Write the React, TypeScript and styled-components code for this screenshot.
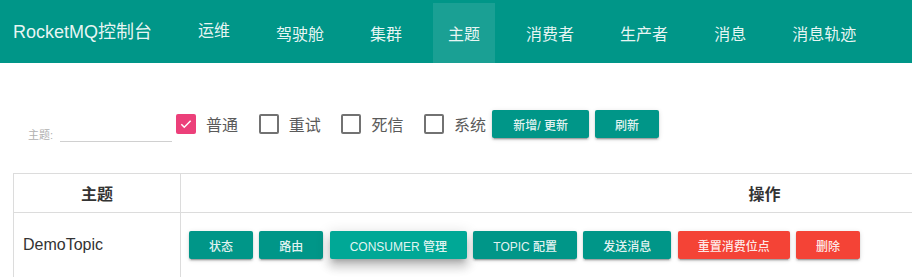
import * as React from 'react'
import styled, { createGlobalStyle } from 'styled-components'

const GlobalStyle = createGlobalStyle`
    html, body {
        margin: 0;
        padding: 0;
        background: #fff;
        overflow: hidden;
    }
    body {
        font-family: "Liberation Sans", "Noto Sans CJK SC", sans-serif;
    }
`

const NAV_ITEMS = ['运维', '驾驶舱', '集群', '主题', '消费者', '生产者', '消息', '消息轨迹']

const FILTERS = [
    { label: '普通', checked: true },
    { label: '重试', checked: false },
    { label: '死信', checked: false },
    { label: '系统', checked: false },
]

const ACTIONS = [
    { text: '状态', color: 'primary' },
    { text: '路由', color: 'primary' },
    { text: 'CONSUMER 管理', color: 'primary', hover: true },
    { text: 'TOPIC 配置', color: 'primary' },
    { text: '发送消息', color: 'primary' },
    { text: '重置消费位点', color: 'warn' },
    { text: '删除', color: 'warn' },
]

const Page = styled.div`
    width: 912px;
    min-height: 277px;
    overflow: hidden;
`

const NavBar = styled.div`
    height: 63px;
    background: #009688;
    display: flex;
    align-items: flex-start;
`

const Brand = styled.div`
    height: 63px;
    padding: 0 31px 3px 13px;
    display: flex;
    align-items: center;
    box-sizing: border-box;
    font-size: 18px;
    color: rgba(255, 255, 255, 0.92);
    white-space: nowrap;
`

const NavList = styled.div`
    display: flex;
    gap: 16px;
    margin-top: 3px;
`

const NavItem = styled.div<{ $active?: boolean; $lift?: boolean }>`
    height: 60px;
    padding: 0 15px ${p => (p.$lift ? '8px' : '0')};
    box-sizing: border-box;
    display: flex;
    align-items: center;
    font-size: 16px;
    color: rgba(255, 255, 255, 0.92);
    background: ${p => (p.$active ? 'rgba(255, 255, 255, 0.1)' : 'transparent')};
    white-space: nowrap;
`

const Toolbar = styled.div`
    display: flex;
    align-items: center;
    height: 28px;
    margin-top: 47px;
    padding-left: 28px;
`

const Field = styled.div`
    display: flex;
    align-items: flex-end;
    height: 36px;
    width: 148px;
`

const FieldLabel = styled.span`
    width: 27px;
    font-size: 11px;
    line-height: 14px;
    color: #b0b0b0;
`

const FieldInput = styled.div`
    width: 112px;
    height: 20px;
    margin-left: 5px;
    border-bottom: 1px solid #d0d0d0;
`

const Check = styled.label`
    display: flex;
    align-items: center;
    margin-right: 20.7px;
    &:last-of-type {
        margin-right: 6px;
    }
`

const Box = styled.span<{ $checked: boolean }>`
    width: 20px;
    height: 20px;
    box-sizing: border-box;
    border-radius: 2px;
    border: ${p => (p.$checked ? 'none' : '2px solid #727272')};
    background: ${p => (p.$checked ? '#ec407a' : 'transparent')};
    display: flex;
    align-items: center;
    justify-content: center;
    margin-right: 10px;
`

const CheckText = styled.span`
    width: 32px;
    font-size: 16px;
    color: #5a5a5a;
    white-space: nowrap;
`

const Button = styled.button<{ $color?: string; $hover?: boolean; $min?: number }>`
    height: 28px;
    min-width: ${p => p.$min ?? 64}px;
    padding: 0 20px;
    border: none;
    border-radius: 2px;
    font-family: "Liberation Sans", "Noto Sans CJK SC", sans-serif;
    font-size: 12px;
    font-weight: 500;
    color: rgba(255, 255, 255, 0.9);
    white-space: nowrap;
    background: ${p => (p.$color === 'warn' ? '#f44336' : p.$hover ? '#00a896' : '#009688')};
    box-shadow: ${p =>
        p.$hover
            ? '0 5px 5px -3px rgba(0,0,0,.2), 0 8px 10px 1px rgba(0,0,0,.14), 0 3px 14px 2px rgba(0,0,0,.12)'
            : '0 3px 1px -2px rgba(0,0,0,.2), 0 2px 2px 0 rgba(0,0,0,.14), 0 1px 5px 0 rgba(0,0,0,.12)'};
`

const ButtonRow = styled.div<{ $gap?: number }>`
    display: flex;
    gap: ${p => p.$gap ?? 6.3}px;
`

const Table = styled.table`
    margin: 35px 0 0 13px;
    width: 1336px;
    border-collapse: collapse;
    table-layout: fixed;
`

const HeadCell = styled.th<{ $width?: number }>`
    width: ${p => (p.$width ? `${p.$width}px` : 'auto')};
    height: 38px;
    padding: 0;
    border: 1px solid #dcdcdc;
    font-size: 16px;
    font-weight: 600;
    color: #333;
    text-align: center;
`

const Cell = styled.td`
    height: 64px;
    padding: 0 9px 0 8px;
    border: 1px solid #dcdcdc;
    font-size: 16px;
    color: #333;
    vertical-align: middle;
    &:first-child {
        padding-left: 9px;
    }
`

const CheckMark = () => (
    <svg width="14" height="14" viewBox="0 0 24 24">
        <path d="M4 12.5l5 5L20 6.5" fill="none" stroke="#fff" strokeWidth="2.6" />
    </svg>
)

const App = () => {
    return (
        <Page>
            <GlobalStyle />
            <NavBar>
                <Brand>RocketMQ控制台</Brand>
                <NavList>
                    {NAV_ITEMS.map(item => (
                        <NavItem key={item} $active={item === '主题'} $lift={item === '运维'}>
                            {item}
                        </NavItem>
                    ))}
                </NavList>
            </NavBar>
            <Toolbar>
                <Field>
                    <FieldLabel>主题:</FieldLabel>
                    <FieldInput />
                </Field>
                {FILTERS.map(f => (
                    <Check key={f.label}>
                        <Box $checked={f.checked}>{f.checked && <CheckMark />}</Box>
                        <CheckText>{f.label}</CheckText>
                    </Check>
                ))}
                <ButtonRow $gap={6}>
                    <Button $min={97}>新增/ 更新</Button>
                    <Button>刷新</Button>
                </ButtonRow>
            </Toolbar>
            <Table>
                <thead>
                    <tr>
                        <HeadCell $width={166}>主题</HeadCell>
                        <HeadCell>操作</HeadCell>
                    </tr>
                </thead>
                <tbody>
                    <tr>
                        <Cell>DemoTopic</Cell>
                        <Cell>
                            <ButtonRow>
                                {ACTIONS.map(a => (
                                    <Button key={a.text} $color={a.color} $hover={a.hover}>
                                        {a.text}
                                    </Button>
                                ))}
                            </ButtonRow>
                        </Cell>
                    </tr>
                </tbody>
            </Table>
        </Page>
    )
}

export default App
